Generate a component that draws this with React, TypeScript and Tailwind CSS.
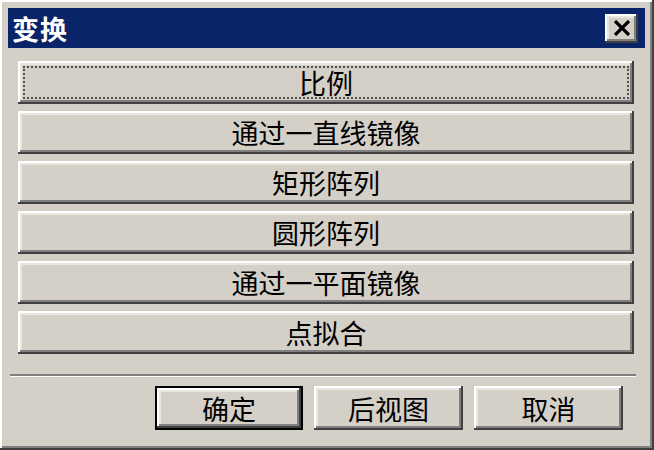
import React from "react";

const raised =
  "shadow-[inset_-2px_-2px_0_#404040,inset_2px_2px_0_#ffffff,inset_-4px_-4px_0_#808080,inset_4px_4px_0_#e8e6e1]";

const actions = ["比例", "通过一直线镜像", "矩形阵列", "圆形阵列", "通过一平面镜像", "点拟合"];

function CloseIcon() {
  return (
    <svg width="18" height="16" viewBox="0 0 18 16">
      <path d="M2 1 L16 15 M16 1 L2 15" stroke="#000" strokeWidth="3.2" />
    </svg>
  );
}

export default function App() {
  return (
    <div
      className="w-[654px] h-[450px] bg-[#d4d0c8] flex flex-col pt-[8px] pl-[8px] pr-[9px] text-black shadow-[inset_-2px_-2px_0_#404040,inset_2px_2px_0_#ffffff,inset_-4px_-4px_0_#808080]"
      style={{ fontFamily: '"Noto Sans CJK SC", "Liberation Sans", sans-serif' }}
    >
      <div className="h-[40px] bg-[#0a246a] flex items-center justify-between pl-[4px] pr-[7px]">
        <span className="text-white font-bold text-[27px] leading-none tracking-[1px]">变换</span>
        <button className={`w-[33px] h-[29px] bg-[#d4d0c8] flex items-center justify-center ${raised}`}>
          <CloseIcon />
        </button>
      </div>

      <div className="flex flex-col gap-[7px] pl-[10px] pr-[11px] mt-[13px]">
        {actions.map((a, i) => (
          <button
            key={a}
            className={`h-[43px] bg-[#d4d0c8] flex items-center justify-center text-[27px] leading-none ${raised} ${
              i === 0 ? "outline-2 outline-dotted outline-[#505050] outline-offset-[-7px]" : ""
            }`}
          >
            {a}
          </button>
        ))}
      </div>

      <div className="mt-[20px] ml-[2px] mr-[9px] h-[3px] border-t-[2px] border-[#808080] border-b border-b-white" />

      <div className="flex justify-end gap-[11px] mt-[9px] pr-[22px]">
        <button
          className={`w-[148px] h-[44px] bg-[#d4d0c8] flex items-center justify-center text-[27px] leading-none border-2 border-black ${raised}`}
        >
          确定
        </button>
        <button className={`w-[149px] h-[44px] bg-[#d4d0c8] flex items-center justify-center text-[27px] leading-none ${raised}`}>
          后视图
        </button>
        <button className={`w-[149px] h-[44px] bg-[#d4d0c8] flex items-center justify-center text-[27px] leading-none ${raised}`}>
          取消
        </button>
      </div>
    </div>
  );
}
